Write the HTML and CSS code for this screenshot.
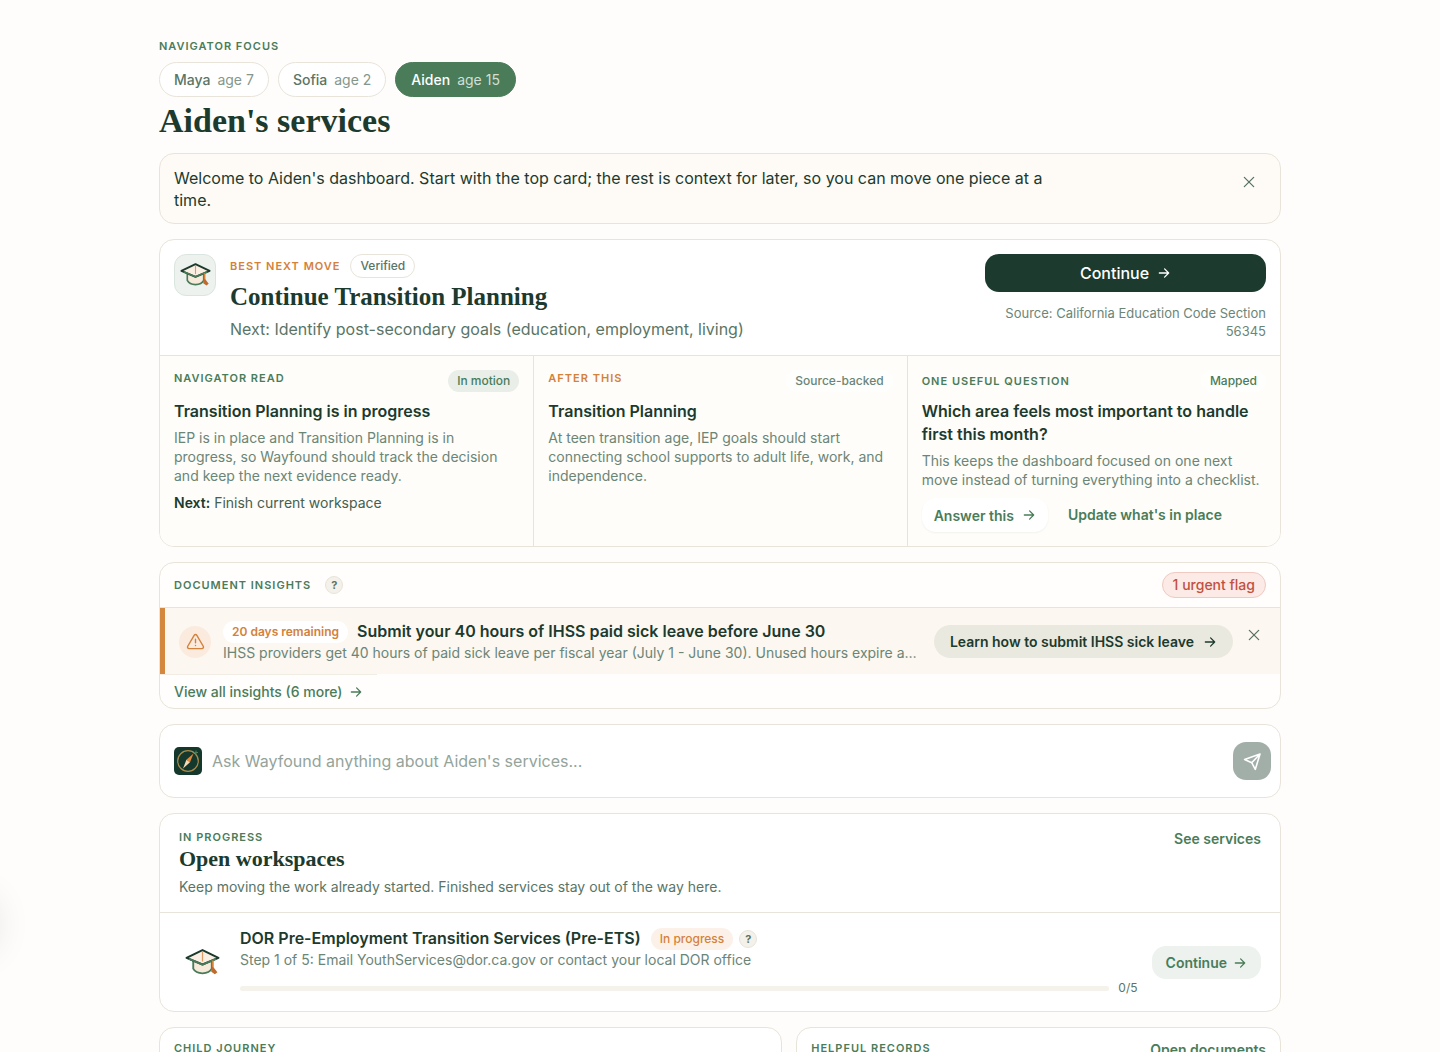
FILE: index.html
```html
<!DOCTYPE html>
<html lang="en">
<head>
    <meta charset="UTF-8">
    <meta name="viewport" content="width=device-width, initial-scale=1.0">
    <title>Aiden's services</title>
    <link rel="stylesheet" href="styles.css">
</head>
<body>

    <!-- shared icons -->
    <svg class="icon-defs" aria-hidden="true">
        <symbol id="arrow" viewBox="0 0 24 24">
            <path d="M4 12h16M13 5l7 7-7 7" fill="none" stroke="currentColor" stroke-width="2.2" stroke-linecap="round" stroke-linejoin="round"/>
        </symbol>
        <symbol id="close" viewBox="0 0 24 24">
            <path d="M4 4l16 16M20 4L4 20" fill="none" stroke="currentColor" stroke-width="2.2" stroke-linecap="round"/>
        </symbol>
        <symbol id="warning" viewBox="0 0 24 24">
            <path d="M10.3 4.2L2.2 18a2 2 0 0 0 1.7 3h16.2a2 2 0 0 0 1.7-3L13.7 4.2a2 2 0 0 0-3.4 0zM12 9v4.5M12 17v.2" fill="none" stroke="currentColor" stroke-width="1.8" stroke-linecap="round" stroke-linejoin="round"/>
        </symbol>
        <symbol id="send" viewBox="0 0 24 24">
            <path d="M21.5 2.5L2 9.5l9 4 4.5 8.5zM21.5 2.5L11 13.5" fill="none" stroke="currentColor" stroke-width="2" stroke-linecap="round" stroke-linejoin="round"/>
        </symbol>
        <symbol id="cap" viewBox="0 0 34 28">
            <path d="M8 11v9c3 6 15 6 18 0v-9z" fill="#f8eadb" stroke="#4a7c59" stroke-width="1.8"/>
            <path d="M1.5 9.5L17 2l15.5 7.5L17 16z" fill="#fbeee3" stroke="#1c3a2e" stroke-width="2" stroke-linejoin="round"/>
            <path d="M4 10.5L17 16l13-5.5" fill="none" stroke="#4a7c59" stroke-width="1.8" stroke-linejoin="round"/>
            <path d="M17 3v10" stroke="#dd9a64" stroke-width="1.2"/>
            <path d="M27 12v9" stroke="#d4813a" stroke-width="1.8"/>
            <path d="M26 18l2 1 3.5 4.5-2.5 2-3.5-2.5z" fill="#c06a2c"/>
        </symbol>
    </svg>

    <main class="dashboard">
        <header class="page-head">
            <p class="eyebrow">Navigator focus</p>
            <div class="children">
                <button class="child">Maya <span>age 7</span></button>
                <button class="child">Sofia <span>age 2</span></button>
                <button class="child active">Aiden <span>age 15</span></button>
            </div>
            <h1>Aiden's services</h1>
        </header>

        <section class="card welcome">
            <p>Welcome to Aiden's dashboard. Start with the top card; the rest is context for later, so you can move one piece at a time.</p>
            <button class="close" aria-label="Dismiss"><svg><use href="#close"/></svg></button>
        </section>

        <section class="card">
            <div class="next-move">
                <div class="cap-tile"><svg><use href="#cap"/></svg></div>
                <div class="next-text">
                    <div class="next-labels">
                        <p class="eyebrow orange">Best next move</p>
                        <span class="pill outline">Verified</span>
                    </div>
                    <h2>Continue Transition Planning</h2>
                    <p class="next-step">Next: Identify post-secondary goals (education, employment, living)</p>
                </div>
                <div class="next-action">
                    <button class="primary">Continue <svg class="arrow"><use href="#arrow"/></svg></button>
                    <p>Source: California Education Code Section 56345</p>
                </div>
            </div>
            <div class="reads">
                <div class="read">
                    <div class="read-head">
                        <p class="eyebrow">Navigator read</p>
                        <span class="pill green">In motion</span>
                    </div>
                    <h3>Transition Planning is in progress</h3>
                    <p>IEP is in place and Transition Planning is in progress, so Wayfound should track the decision and keep the next evidence ready.</p>
                    <p class="read-next"><strong>Next:</strong> Finish current workspace</p>
                </div>
                <div class="read">
                    <div class="read-head">
                        <p class="eyebrow orange">After this</p>
                        <span class="pill plain">Source-backed</span>
                    </div>
                    <h3>Transition Planning</h3>
                    <p>At teen transition age, IEP goals should start connecting school supports to adult life, work, and independence.</p>
                </div>
                <div class="read">
                    <div class="read-head centered">
                        <p class="eyebrow">One useful question</p>
                        <span class="pill plain mapped">Mapped</span>
                    </div>
                    <h3>Which area feels most important to handle first this month?</h3>
                    <p>This keeps the dashboard focused on one next move instead of turning everything into a checklist.</p>
                    <div class="read-actions">
                        <button class="answer">Answer this <svg class="arrow"><use href="#arrow"/></svg></button>
                        <a href="#" class="link">Update what's in place</a>
                    </div>
                </div>
            </div>
        </section>

        <section class="card insights">
            <div class="insights-head">
                <p class="eyebrow">Document insights</p>
                <button class="help" aria-label="About document insights">?</button>
                <span class="urgent">1 urgent flag</span>
            </div>
            <div class="insight">
                <div class="warning"><svg><use href="#warning"/></svg></div>
                <div class="insight-text">
                    <div class="insight-title">
                        <span class="pill days">20 days remaining</span>
                        <h3>Submit your 40 hours of IHSS paid sick leave before June 30</h3>
                    </div>
                    <p>IHSS providers get 40 hours of paid sick leave per fiscal year (July 1 - June 30). Unused hours expire after.</p>
                </div>
                <button class="learn">Learn how to submit IHSS sick leave <svg class="arrow"><use href="#arrow"/></svg></button>
                <button class="close" aria-label="Dismiss insight"><svg><use href="#close"/></svg></button>
            </div>
            <a href="#" class="view-all">View all insights (6 more) <svg class="arrow"><use href="#arrow"/></svg></a>
        </section>

        <form class="card ask">
            <svg class="compass" viewBox="0 0 28 28" aria-hidden="true">
                <rect width="28" height="28" rx="5" fill="#14382c"/>
                <circle cx="14" cy="14" r="10.3" fill="none" stroke="#a98a4c" stroke-width="1.2"/>
                <path d="M19.5 6.5L16 15.2l-3.6-2.4z" fill="#e0883f"/>
                <path d="M9 21.5l3.4-8.7 3.6 2.4z" fill="#f6d9b8"/>
                <path d="M22 3.5v4M20 5.5h4" stroke="#4a7c59" stroke-width="1"/>
            </svg>
            <input type="text" aria-label="Ask Wayfound" placeholder="Ask Wayfound anything about Aiden's services...">
            <button type="button" class="send" aria-label="Send"><svg><use href="#send"/></svg></button>
        </form>

        <section class="card">
            <div class="work-head">
                <div>
                    <p class="eyebrow">In progress</p>
                    <h2>Open workspaces</h2>
                    <p>Keep moving the work already started. Finished services stay out of the way here.</p>
                </div>
                <a href="#" class="link">See services</a>
            </div>
            <div class="workspace">
                <svg class="cap"><use href="#cap"/></svg>
                <div class="work-text">
                    <div class="work-title">
                        <h3>DOR Pre-Employment Transition Services (Pre-ETS)</h3>
                        <span class="pill progress-pill">In progress</span>
                        <button class="help" aria-label="About this service">?</button>
                    </div>
                    <p>Step 1 of 5: Email YouthServices@dor.ca.gov or contact your local DOR office</p>
                    <div class="progress">
                        <div class="track"></div>
                        <span>0/5</span>
                    </div>
                </div>
                <button class="resume">Continue <svg class="arrow"><use href="#arrow"/></svg></button>
            </div>
        </section>

        <div class="bottom">
            <section class="card bottom-card">
                <p class="eyebrow">Child journey</p>
            </section>
            <section class="card bottom-card">
                <p class="eyebrow">Helpful records</p>
                <a href="#" class="link">Open documents</a>
            </section>
        </div>
    </main>

</body>
</html>
```
FILE: styles.css
```css
* {
    box-sizing: border-box;
}
body {
    margin: 0;
    height: 100vh;
    overflow: hidden;
    font-family: "Inter", sans-serif;
    font-size: 14px;
    line-height: 20px;
    color: #1c3a2e;
    background-color: #fefdfb;
}
body::before {
    content: "";
    position: absolute;
    left: -56px;
    top: 900px;
    width: 48px;
    height: 48px;
    border-radius: 50%;
    box-shadow: 0 0 40px rgba(0, 0, 0, 0.16);
}
h1, h2, h3, p {
    margin: 0;
}
h1, h2 {
    font-family: "Liberation Serif", serif;
    font-weight: 700;
}
h3 {
    font-size: 16px;
    font-weight: 600;
    line-height: 23px;
}
button, input {
    font-family: inherit;
    color: inherit;
    border: none;
    background: none;
    padding: 0;
}
button {
    display: inline-flex;
    align-items: center;
    justify-content: center;
    cursor: pointer;
    white-space: nowrap;
}
a {
    text-decoration: none;
}
svg {
    flex: none;
}
.icon-defs {
    position: absolute;
    width: 0;
    height: 0;
}
.dashboard {
    display: flex;
    flex-direction: column;
    gap: 15px;
    max-width: 1154px;
    margin: 0 auto;
    padding: 38px 16px 0;
}
.card {
    flex: none;
    background-color: #fff;
    border: 1px solid #e8e4da;
    border-radius: 15px;
    overflow: hidden;
}
.eyebrow {
    font-size: 11px;
    font-weight: 600;
    line-height: 16px;
    letter-spacing: 1px;
    text-transform: uppercase;
    color: #4a7c59;
}
.orange {
    color: #d4813a;
}
.arrow {
    width: 14px;
    height: 14px;
}
.link {
    font-weight: 600;
    color: #4a7c59;
}
.pill {
    flex: none;
    padding: 2px 9px;
    border-radius: 12px;
    font-size: 12px;
    font-weight: 500;
    line-height: 18px;
}

/* page head */
.children {
    display: flex;
    gap: 9px;
    margin-top: 8px;
}
.child {
    gap: 7px;
    height: 35px;
    padding: 0 14px;
    border: 1px solid #e8e4da;
    border-radius: 18px;
    background-color: #fff;
    font-size: 14px;
    font-weight: 500;
    color: #5a7566;
}
.child span {
    font-weight: 400;
    color: #85978c;
}
.child.active {
    padding: 0 15px;
    background-color: #4a7c59;
    border-color: #4a7c59;
    color: #fff;
}
.child.active span {
    color: #d2dfd5;
}
h1 {
    margin-top: 7px;
    font-size: 34px;
    line-height: 34px;
}

/* welcome */
.welcome {
    display: flex;
    justify-content: space-between;
    padding: 13px 14px 12px;
    background-color: #fefbf6;
}
.welcome p {
    max-width: 890px;
    font-size: 16px;
    line-height: 22px;
}
.close {
    width: 34px;
    height: 30px;
    color: #5a7566;
}
.close svg {
    width: 14px;
    height: 14px;
}

/* best next move */
.next-move {
    display: flex;
    gap: 14px;
    padding: 14px 14px 15px;
    border-bottom: 1px solid #e8e4da;
}
.cap-tile {
    flex: none;
    display: flex;
    align-items: center;
    justify-content: center;
    width: 42px;
    height: 42px;
    border: 1px solid #dbe5df;
    border-radius: 12px;
    background-color: #edf2ef;
}
.cap-tile svg {
    width: 31px;
    height: 26px;
}
.next-text {
    flex: 1;
}
.next-labels {
    display: flex;
    align-items: center;
    gap: 10px;
}
.outline {
    border: 1px solid #e8e4da;
    color: #5a7566;
}
.next-text h2 {
    margin-top: 4px;
    font-size: 25px;
    line-height: 30px;
}
.next-step {
    margin-top: 6px;
    font-size: 16px;
    line-height: 22px;
    color: #5a7566;
}
.next-action {
    flex: none;
    width: 281px;
    text-align: right;
}
.primary {
    width: 100%;
    height: 38px;
    gap: 8px;
    border-radius: 14px;
    background-color: #1c3a2e;
    font-size: 16px;
    font-weight: 500;
    color: #fff;
}
.next-action p {
    margin-top: 12px;
    font-size: 13px;
    line-height: 18px;
    color: #6b8577;
}
.reads {
    display: grid;
    grid-template-columns: repeat(3, 1fr);
    background-color: #fefdf9;
}
.read {
    padding: 14px;
    border-left: 1px solid #e8e4da;
}
.read:first-child {
    border-left: none;
}
.read-head {
    display: flex;
    justify-content: space-between;
    margin-bottom: 8px;
}
.centered {
    align-items: center;
}
.green {
    background-color: #e9eee8;
    color: #4a7c59;
}
.plain {
    background-color: #fefefc;
    color: #6b8577;
}
.mapped {
    color: #4a7c59;
}
.read > p {
    margin-top: 5px;
    line-height: 19px;
    color: #6b8577;
}
.read .read-next {
    margin-top: 8px;
    color: #45604f;
}
.read-next strong {
    font-weight: 600;
    color: #1c3a2e;
}
.read-actions {
    display: flex;
    align-items: center;
    gap: 20px;
    margin-top: 9px;
}
.answer {
    gap: 8px;
    height: 34px;
    padding: 0 12px;
    border-radius: 14px;
    background-color: #fff;
    box-shadow: 0 1px 2px rgba(28, 58, 46, 0.06);
    font-size: 14px;
    font-weight: 600;
    color: #4a7c59;
}

/* document insights */
.insights {
    background-color: #fffefd;
}
.insights-head {
    display: flex;
    align-items: center;
    gap: 14px;
    padding: 9px 14px;
    border-bottom: 1px solid #e8e4da;
}
.help {
    width: 18px;
    height: 18px;
    border: 1px solid #e8e4da;
    border-radius: 50%;
    background-color: #f4f1ea;
    font-size: 11px;
    font-weight: 700;
    color: #5a7566;
}
.urgent {
    margin-left: auto;
    padding: 2px 10px;
    border: 1px solid #efc9c2;
    border-radius: 14px;
    background-color: #fbeae6;
    font-weight: 500;
    color: #c2503f;
}
.insight {
    display: flex;
    align-items: center;
    padding: 12px 9px 11px 14px;
    border-left: 5px solid #d4873f;
    background-color: #fcf7f0;
}
.warning {
    flex: none;
    display: flex;
    align-items: center;
    justify-content: center;
    width: 32px;
    height: 32px;
    margin-right: 12px;
    border-radius: 50%;
    background-color: #fbebdf;
    color: #d4813a;
}
.warning svg {
    width: 19px;
    height: 19px;
}
.insight-text {
    flex: 1;
    min-width: 0;
    margin-right: 14px;
}
.insight-title {
    display: flex;
    align-items: center;
    gap: 9px;
}
.days {
    background-color: #fff;
    font-weight: 600;
    color: #d4813a;
}
.insight-text p {
    overflow: hidden;
    white-space: nowrap;
    text-overflow: ellipsis;
    color: #6b8577;
}
.learn {
    gap: 9px;
    height: 33px;
    padding: 0 16px;
    border-radius: 17px;
    background-color: #e9e9df;
    font-size: 14px;
    font-weight: 600;
}
.insight .close {
    align-self: flex-start;
    margin-left: 4px;
}
.view-all {
    display: flex;
    align-items: center;
    gap: 6px;
    width: fit-content;
    padding: 7px 14px 6px;
    border-top: 1px solid #f1ede4;
    font-weight: 500;
    color: #4a7c59;
}

/* ask */
.ask {
    display: flex;
    align-items: center;
    gap: 10px;
    padding: 17px 9px 17px 14px;
}
.compass {
    width: 28px;
    height: 28px;
}
.ask input {
    flex: 1;
    min-width: 0;
    height: 38px;
    font-size: 16px;
    outline: none;
}
.ask input::placeholder {
    color: #94a49b;
    opacity: 1;
}
.send {
    width: 38px;
    height: 38px;
    border-radius: 13px;
    background-color: #a2afa9;
    color: #fff;
}
.send svg {
    width: 19px;
    height: 19px;
}

/* open workspaces */
.work-head {
    display: flex;
    justify-content: space-between;
    padding: 15px 19px;
    border-bottom: 1px solid #e8e4da;
}
.work-head h2 {
    font-size: 22px;
    line-height: 28px;
}
.work-head div > p:last-child {
    margin-top: 4px;
    color: #5a7566;
}
.workspace {
    display: flex;
    align-items: center;
    padding: 14px 19px 13px;
}
.workspace .cap {
    width: 35px;
    height: 29px;
    margin: 0 20px 0 6px;
}
.work-text {
    flex: 1;
    min-width: 0;
    margin-right: 14px;
}
.work-title {
    display: flex;
    align-items: center;
    gap: 10px;
}
.work-title .help {
    margin-left: -4px;
}
.progress-pill {
    background-color: #fcf1e9;
    color: #d4813a;
}
.work-text p {
    color: #6b8577;
}
.progress {
    display: flex;
    align-items: center;
    gap: 9px;
    margin-top: 8px;
    font-size: 12px;
    color: #5a7566;
}
.track {
    flex: 1;
    height: 5px;
    border-radius: 3px;
    background-color: #f4f2ea;
}
.resume {
    gap: 6px;
    height: 33px;
    padding: 0 14px;
    border-radius: 14px;
    background-color: #edf2ee;
    font-size: 14px;
    font-weight: 600;
    color: #4a7c59;
}

/* bottom row */
.bottom {
    display: grid;
    grid-template-columns: 9fr 7fr;
    gap: 14px;
}
.bottom-card {
    display: flex;
    justify-content: space-between;
    min-height: 120px;
    padding: 12px 14px;
}
```
